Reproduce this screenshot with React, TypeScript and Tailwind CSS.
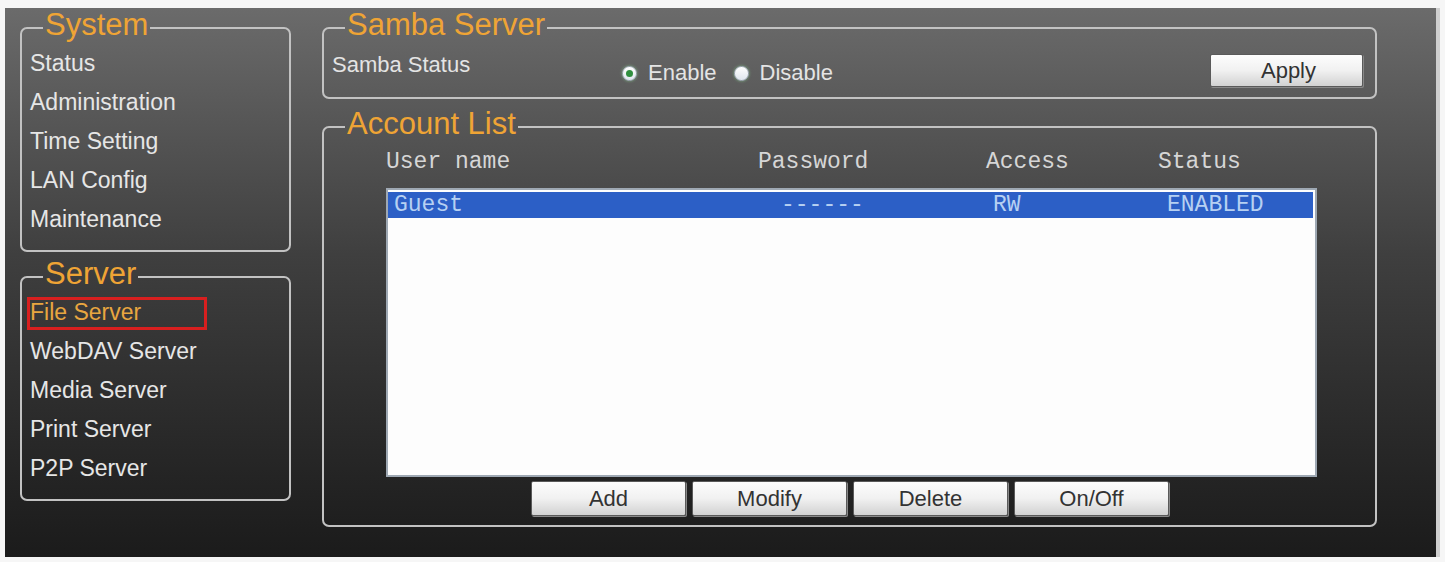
import type { ReactNode } from "react";

const SYSTEM_ITEMS = ["Status", "Administration", "Time Setting", "LAN Config", "Maintenance"];
const SERVER_ITEMS = ["File Server", "WebDAV Server", "Media Server", "Print Server", "P2P Server"];
const ACTIONS = ["Add", "Modify", "Delete", "On/Off"];

function Box({ title, className = "", children }: { title: string; className?: string; children: ReactNode }) {
  return (
    <fieldset className={`rounded-[7px] border-2 border-[#c2c2c2] pl-[8px] ${className}`}>
      <legend className="ml-[13px] px-[2px] pb-[5px] text-[31px] leading-[28px] text-[#efa435]">
        {title}
      </legend>
      {children}
    </fieldset>
  );
}

function Radio({ checked }: { checked?: boolean }) {
  return (
    <span className="flex h-[15px] w-[15px] items-center justify-center rounded-full border border-[#a9b4bf] bg-gradient-to-b from-white to-[#dfe6ee] shadow-[0_0_3px_rgba(140,220,150,0.7)]">
      {checked && <span className="h-[7px] w-[7px] rounded-full bg-[#2f8f3f]" />}
    </span>
  );
}

function Button({ label, className = "" }: { label: string; className?: string }) {
  return (
    <button className={`rounded-[2px] border border-[#5a5a5a] bg-gradient-to-b from-[#fdfdfd] via-[#f1f1f1] to-[#d2d2d2] text-[22px] leading-none text-[#333] shadow-[1px_1px_0_#888] ${className}`}>
      {label}
    </button>
  );
}

export default function App() {
  return (
    <div className="h-[562px] w-[1445px] overflow-hidden bg-[#f6f6f6] pt-[8px] font-['Liberation_Sans',Arial,sans-serif]">
      <div className="ml-[5px] flex h-[549px] w-[1435px] gap-[31px] border-r-4 border-[#cfcfcf] bg-gradient-to-b from-[#6b6b6b] via-[#3f3f3f] via-45% to-[#1b1b1b] pl-[15px] pt-[3px]">
        {/* left menu */}
        <div className="w-[271px]">
          <Box title="System">
            <ul className="pb-[11px]">
              {SYSTEM_ITEMS.map((item) => (
                <li key={item} className="text-[23px] leading-[39px] text-[#e6e6e6]">
                  {item}
                </li>
              ))}
            </ul>
          </Box>
          <Box title="Server" className="mt-[8px]">
            <ul className="pb-[11px]">
              {SERVER_ITEMS.map((item) => (
                <li
                  key={item}
                  className={`relative text-[23px] leading-[39px] ${item === "File Server" ? "text-[#e8a640]" : "text-[#e6e6e6]"}`}
                >
                  {item}
                  {item === "File Server" && (
                    <span className="absolute -left-[3px] top-[4px] h-[33px] w-[180px] border-[3px] border-[#d81f1f]" />
                  )}
                </li>
              ))}
            </ul>
          </Box>
        </div>

        {/* main */}
        <div className="w-[1055px]">
          <Box title="Samba Server" className="pr-[12px]">
            <div className="flex items-start pb-[10px]">
              <span className="mt-[7px] w-[290px] text-[22px] leading-[28px] text-[#e4e4e4]">Samba Status</span>
              <div className="mt-[15px] flex items-center text-[22px] leading-[28px] text-[#e4e4e4]">
                <Radio checked />
                <span className="ml-[11px]">Enable</span>
                <span className="ml-[17px]">
                  <Radio />
                </span>
                <span className="ml-[11px]">Disable</span>
              </div>
              <Button label="Apply" className="ml-auto mt-[10px] h-[33px] w-[153px] pl-[4px]" />
            </div>
          </Box>

          <Box title="Account List" className="mt-[11px]">
            <div className="pb-[9px] pl-[54px]">
              <div className="mt-[5px] grid grid-cols-[372px_228px_172px_1fr] font-['Liberation_Mono','Courier_New',monospace] text-[23px] leading-[28px] text-[#d6d6d6]">
                <span>User name</span>
                <span>Password</span>
                <span>Access</span>
                <span>Status</span>
              </div>

              <div className="mt-[12px] h-[289px] w-[931px] border-2 border-[#9ea8b3] bg-[#fdfdfd] pr-[2px] pt-[2px]">
                <div className="grid h-[26px] grid-cols-[387px_212px_174px_1fr] bg-[#2c5fc6] pl-[6px] font-['Liberation_Mono','Courier_New',monospace] text-[23px] leading-[26px] text-[#b6d0f2]">
                  <span>Guest</span>
                  <span>------</span>
                  <span>RW</span>
                  <span>ENABLED</span>
                </div>
              </div>

              <div className="ml-[145px] mt-[4px] flex gap-[6px]">
                {ACTIONS.map((a) => (
                  <Button key={a} label={a} className="h-[35px] w-[155px]" />
                ))}
              </div>
            </div>
          </Box>
        </div>
      </div>
    </div>
  );
}
